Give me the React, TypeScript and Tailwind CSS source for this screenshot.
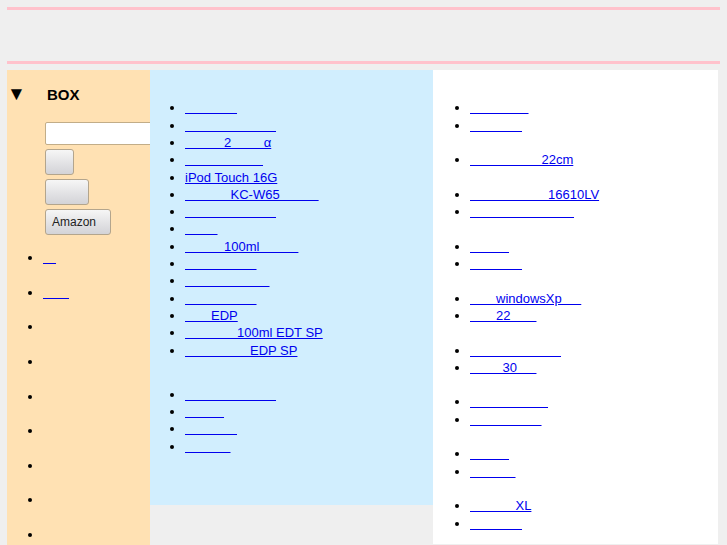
type Seg = number | string;

// glyphs the page font could not draw show up as blank cells, one em wide
const blank = (px: number) => {
  const halves = Math.round(px / 6.5);
  return '\u3000'.repeat(Math.floor(halves / 2)) + (halves % 2 ? '\u2002' : '');
};

const ItemLink = ({ segs }: { segs: Seg[] }) => (
  <a href="#" className="text-[#0000ee] underline">
    {segs.map((s) => (typeof s === 'number' ? blank(s) : s)).join('')}
  </a>
);

const popular: Seg[][] = [
  [52],
  [88],
  [36, '2', 34, 'α'],
  [77],
  ['iPod Touch 16G'],
  [47, 'KC-W65', 36],
  [92],
  [30],
  [40, '100ml', 40],
  [74],
  [84],
  [74],
  [26, 'EDP'],
  [51, '100ml EDT SP'],
  [68, 'EDP SP'],
];

const more: Seg[][] = [[88], [37], [52], [48]];

const groups: Seg[][][] = [
  [[59], [55]],
  [[73, '22cm']],
  [[80, '16610LV'], [106]],
  [[41], [51]],
  [[29, 'windowsXp', 18], [25, '22', 23]],
  [[92], [33, '30', 19]],
  [[77], [70]],
  [[41], [48]],
  [[48, 'XL'], [55]],
];

const sideLinks: (Seg[] | null)[] = [[16], [23], null, null, null, null, null, null, null];

const buttonCls =
  'h-[26px] rounded-[3px] border border-[#b3a58d] bg-linear-to-b from-[#f6f6f6] to-[#d3d3d7] pl-[6px] text-left text-[12px] leading-none text-[#222]';

export default function App() {
  return (
    <div className="min-h-screen overflow-hidden bg-[#efefef] font-['Liberation_Sans','Noto_Sans_CJK_JP',sans-serif] text-[13px] leading-[17.3px] text-black">
      <header className="pl-[7px] pt-[7px]">
        <div className="h-[3px] w-[713px] bg-[#ffc2cc]" />
        <div className="h-[51px]" />
        <div className="h-[3px] w-[713px] bg-[#ffc2cc]" />
      </header>

      <div className="ml-[7px] mt-[6px] flex items-start">
        <aside className="h-[490px] w-[143px] shrink-0 overflow-hidden bg-[#ffe1b3] pt-[15px]">
          <h2 className="flex items-baseline text-[15px] font-bold leading-[17.3px]">
            <span className="w-[40px] text-[19px] font-normal leading-[17.3px]">▼</span>
            <span>BOX</span>
          </h2>
          <form className="ml-[38px] mt-[19px] flex flex-col items-start gap-[4px]">
            <input
              type="text"
              className="h-[23px] w-[160px] shrink-0 rounded-[2px] border border-[#c2ad88] bg-white"
            />
            <button type="button" className={`${buttonCls} w-[29px]`}>
              {'\u3000'}
            </button>
            <button type="button" className={`${buttonCls} w-[44px]`}>
              {'\u3000\u3000'}
            </button>
            <button type="button" className={`${buttonCls} w-[66px]`}>
              Amazon
            </button>
          </form>
          <ul className="mt-[14px] list-disc pl-[36px]">
            {sideLinks.map((segs, i) => (
              <li key={i} className="h-[34.6px]">
                {segs ? <ItemLink segs={segs} /> : '\u00a0'}
              </li>
            ))}
          </ul>
        </aside>

        <main className="h-[435px] w-[283px] shrink-0 bg-[#d1eefe] pl-[35px] pt-[29.4px]">
          <ul className="list-disc">
            {popular.map((segs, i) => (
              <li key={i}>
                <ItemLink segs={segs} />
              </li>
            ))}
          </ul>
          <ul className="mt-[27px] list-disc">
            {more.map((segs, i) => (
              <li key={i}>
                <ItemLink segs={segs} />
              </li>
            ))}
          </ul>
        </main>

        <section className="h-[474px] w-[285px] shrink-0 bg-white pl-[37px] pt-[29.4px]">
          {groups.map((group, g) => (
            <ul key={g} className="mb-[17.3px] list-disc">
              {group.map((segs, i) => (
                <li key={i}>
                  <ItemLink segs={segs} />
                </li>
              ))}
            </ul>
          ))}
        </section>
      </div>
    </div>
  );
}
